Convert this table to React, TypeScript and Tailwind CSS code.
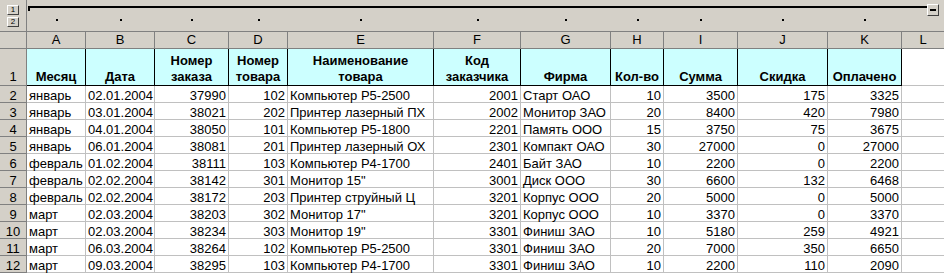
import React from "react";

const GRID =
  "grid grid-cols-[27px_59px_69px_74px_59px_146px_87px_90px_53px_74px_90px_74px_1fr]";

const headers: React.ReactNode[] = [
  "Месяц",
  "Дата",
  <>Номер<br />заказа</>,
  <>Номер<br />товара</>,
  <>Наименование<br />товара</>,
  <>Код<br />заказчика</>,
  "Фирма",
  "Кол-во",
  "Сумма",
  "Скидка",
  "Оплачено",
];

const letters = ["A", "B", "C", "D", "E", "F", "G", "H", "I", "J", "K", "L"];

// true = right aligned
const align = [false, false, true, true, false, true, false, true, true, true, true];

const rows: string[][] = [
  ["январь", "02.01.2004", "37990", "102", "Компьютер Р5-2500", "2001", "Старт ОАО", "10", "3500", "175", "3325"],
  ["январь", "03.01.2004", "38021", "202", "Принтер лазерный ПХ", "2002", "Монитор ЗАО", "20", "8400", "420", "7980"],
  ["январь", "04.01.2004", "38050", "101", "Компьютер Р5-1800", "2201", "Память ООО", "15", "3750", "75", "3675"],
  ["январь", "06.01.2004", "38081", "201", "Принтер лазерный ОХ", "2301", "Компакт ОАО", "30", "27000", "0", "27000"],
  ["февраль", "01.02.2004", "38111", "103", "Компьютер Р4-1700", "2401", "Байт ЗАО", "10", "2200", "0", "2200"],
  ["февраль", "02.02.2004", "38142", "301", "Монитор 15\"", "3001", "Диск ООО", "30", "6600", "132", "6468"],
  ["февраль", "02.02.2004", "38172", "203", "Принтер струйный Ц", "3201", "Корпус ООО", "20", "5000", "0", "5000"],
  ["март", "02.03.2004", "38203", "302", "Монитор 17\"", "3201", "Корпус ООО", "10", "3370", "0", "3370"],
  ["март", "02.03.2004", "38234", "303", "Монитор 19\"", "3301", "Финиш ЗАО", "10", "5180", "259", "4921"],
  ["март", "06.03.2004", "38264", "102", "Компьютер Р5-2500", "3301", "Финиш ЗАО", "20", "7000", "350", "6650"],
  ["март", "09.03.2004", "38295", "103", "Компьютер Р4-1700", "3301", "Финиш ЗАО", "10", "2200", "110", "2090"],
];

function LevelButton({ children }: { children: React.ReactNode }) {
  return (
    <div className="w-[12px] h-[10px] bg-[#d4d0c8] border border-t-white border-l-white border-r-[#404040] border-b-[#404040] flex items-center justify-center text-[8px] leading-none text-black">
      {children}
    </div>
  );
}

export default function App() {
  return (
    <div className="w-[944px] h-[273px] overflow-hidden bg-white text-black text-[13px] font-['Liberation_Sans',Arial,sans-serif]">
      {/* Outline area */}
      <div className={`${GRID} h-[31px] bg-[#d4d0c8]`}>
        <div className="border-r border-[#808080] flex flex-col pl-[7px] pt-[5px] gap-[2px]">
          <LevelButton>1</LevelButton>
          <LevelButton>2</LevelButton>
        </div>
        <div className="col-start-2 col-end-14 grid grid-cols-subgrid grid-rows-[16px_15px]">
          <div className="col-span-12 flex items-start">
            <div className="flex-1 ml-[1px] mt-[6px] h-[5px] border-t-2 border-l-2 border-black" />
            <div className="mt-[4px] mr-[5px] w-[12px] h-[12px] bg-[#d4d0c8] border border-t-white border-l-white border-r-[#404040] border-b-[#404040] flex items-center justify-center">
              <div className="w-[6px] h-[2px] bg-black" />
            </div>
          </div>
          {letters.map((l, i) => (
            <div key={l} className="flex justify-center">
              {i < 11 && <div className="mt-[3px] w-[2px] h-[2px] bg-black" />}
            </div>
          ))}
        </div>
      </div>

      {/* Column headers */}
      <div className={`${GRID} h-[18px] bg-[#d4d0c8] border-t border-[#808080]`}>
        <div className="border-r border-b border-[#808080]" />
        {letters.map((l, i) => (
          <div
            key={l}
            className={`border-b border-[#808080] flex items-center justify-center leading-[16px] ${i < 11 ? "border-r" : ""}`}
          >
            {l}
          </div>
        ))}
      </div>

      {/* Row 1: headers */}
      <div className={`${GRID} h-[37px]`}>
        <div className="bg-[#d4d0c8] border-r border-b border-[#808080] flex items-end justify-center leading-[16px]">
          1
        </div>
        {headers.map((h, i) => (
          <div
            key={i}
            className="bg-[#ccffff] border-r border-b border-black flex items-end justify-center text-center font-bold leading-[16px] whitespace-nowrap"
          >
            <div>{h}</div>
          </div>
        ))}
        <div className="border-b border-[#c0c0c0]" />
      </div>

      {/* Data rows */}
      {rows.map((r, ri) => (
        <div key={ri} className={`${GRID} h-[17px]`}>
          <div className="bg-[#d4d0c8] border-r border-b border-[#808080] flex items-end justify-center leading-[13px]">
            {ri + 2}
          </div>
          {r.map((v, ci) => (
            <div
              key={ci}
              className={`border-r border-b border-[#c0c0c0] flex items-end px-[2px] leading-[13px] whitespace-nowrap ${align[ci] ? "justify-end" : "justify-start"}`}
            >
              {v}
            </div>
          ))}
          <div className="border-b border-[#c0c0c0]" />
        </div>
      ))}
    </div>
  );
}
